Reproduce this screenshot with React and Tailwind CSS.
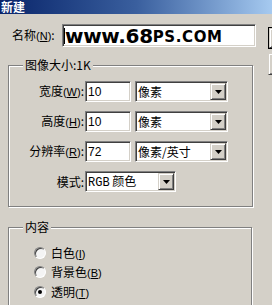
const cjk = "font-['SimSun','Noto_Sans_CJK_SC',sans-serif]";

const sunken =
  "bg-white border border-t-[#808080] border-l-[#808080] border-b-white border-r-white shadow-[inset_1px_1px_0_#404040,inset_-1px_-1px_0_#d4d0c8]";
const raised =
  "bg-[#d4d0c8] border border-t-[#d4d0c8] border-l-[#d4d0c8] border-b-[#404040] border-r-[#404040] shadow-[inset_1px_1px_0_#fff,inset_-1px_-1px_0_#808080]";
const etched =
  "border border-[#808080] shadow-[inset_1px_1px_0_#fff,1px_1px_0_#fff]";

function Key({ k }) {
  return (
    <span className="font-['Liberation_Sans',sans-serif] text-[11px]">
      (<span className="underline">{k}</span>)
    </span>
  );
}

function Arrow() {
  return (
    <div className={`${raised} flex h-[17px] w-[16px] items-center justify-center`}>
      <svg width="7" height="4" viewBox="0 0 7 4">
        <path d="M0 0h7L3.5 4z" fill="#000" />
      </svg>
    </div>
  );
}

function Select({ value, width, mono }) {
  return (
    <div
      className={`${sunken} flex h-[21px] items-center justify-between pl-[2px] pr-[1px]`}
      style={{ width }}
    >
      <span className={`${cjk} text-[12px] leading-none text-black`}>
        {mono ? (
          <>
            <span className="font-['Liberation_Mono',monospace] text-[12px]">RGB</span> 颜色
          </>
        ) : (
          value
        )}
      </span>
      <Arrow />
    </div>
  );
}

function Row({ label, k, value, unit }) {
  return (
    <div className="flex h-[21px] items-center">
      <div className={`${cjk} w-[75px] text-right text-[12px] text-black`}>
        {label}
        {k && <Key k={k} />}:
      </div>
      <div className={`${sunken} ml-[1px] flex h-[21px] w-[46px] items-center pl-[2px]`}>
        <span className="font-['Liberation_Sans',sans-serif] text-[12px] text-black">{value}</span>
      </div>
      {unit && (
        <div className="ml-[4px]">
          <Select value={unit} width={93} />
        </div>
      )}
    </div>
  );
}

function Radio({ label, k, checked }) {
  return (
    <div className="flex h-[19.5px] items-center">
      <div className="flex h-[12px] w-[12px] items-center justify-center rounded-full border border-t-[#808080] border-l-[#808080] border-b-white border-r-white bg-[#f4f4f4] shadow-[inset_1px_1px_0_#404040]">
        {checked && <div className="h-[4px] w-[4px] rounded-full bg-black" />}
      </div>
      <span className={`${cjk} ml-[5px] text-[12px] text-black`}>
        {label}
        <Key k={k} />
      </span>
    </div>
  );
}

export default function App() {
  return (
    <div className="relative h-[305px] w-[272px] overflow-hidden bg-[#d4d0c8]">
      <div className="h-[14px] bg-gradient-to-r from-[#0a246a] via-[#3a5f9e] to-[#a6caf0] pl-[1px]">
        <span className={`${cjk} block text-[12px] font-bold leading-[14px] text-white`}>新建</span>
      </div>

      <div className="flex">
        <div className="w-[268px] shrink-0">
          <div className="mt-[10px] flex items-center">
            <div className={`${cjk} ml-[12px] w-[50px] text-[12px] text-black`}>
              名称<Key k="N" />:
            </div>
            <div className={`${sunken} flex h-[23px] w-[194px] items-center overflow-hidden`}>
              <span className="ml-[1px] h-[16px] w-px bg-black" />
              <span className="font-['DejaVu_Sans',sans-serif] text-[20px] font-bold leading-[20px] tracking-[-0.3px] text-black">
                www.68
              </span>
              <span className="mt-[2px] font-['DejaVu_Sans',sans-serif] text-[15px] font-bold leading-[18px] tracking-[0.6px] text-black">
                PS.COM
              </span>
            </div>
          </div>

          <div className={`${etched} relative ml-[8px] mt-[18px] h-[142px] w-[245px] pt-[15px]`}>
            <span className={`${cjk} absolute -top-[8px] left-[14px] bg-[#d4d0c8] px-[2px] text-[12px] leading-[14px] text-black`}>
              图像大小:1K
            </span>
            <div className="flex flex-col gap-[9px]">
              <Row label="宽度" k="W" value="10" unit="像素" />
              <Row label="高度" k="H" value="10" unit="像素" />
              <Row label="分辨率" k="R" value="72" unit="像素/英寸" />
              <div className="flex h-[21px] items-center">
                <div className={`${cjk} w-[75px] text-right text-[12px] text-black`}>模式:</div>
                <div className="ml-[1px]">
                  <Select mono width={91} />
                </div>
              </div>
            </div>
          </div>

          <div className={`${etched} relative ml-[8px] mt-[20px] h-[100px] w-[244px] pl-[25px] pt-[15px]`}>
            <span className={`${cjk} absolute -top-[8px] left-[14px] bg-[#d4d0c8] px-[2px] text-[12px] leading-[14px] text-black`}>
              内容
            </span>
            <div className="flex flex-col">
              <Radio label="白色" k="I" />
              <Radio label="背景色" k="B" />
              <Radio label="透明" k="T" checked />
            </div>
          </div>
        </div>

        <div className="mt-[13px] flex flex-col gap-[4px]">
          <div className="h-[22px] w-[75px] border border-black">
            <div className={`${raised} h-full w-full`} />
          </div>
          <div className={`${raised} h-[22px] w-[75px]`} />
        </div>
      </div>
    </div>
  );
}
